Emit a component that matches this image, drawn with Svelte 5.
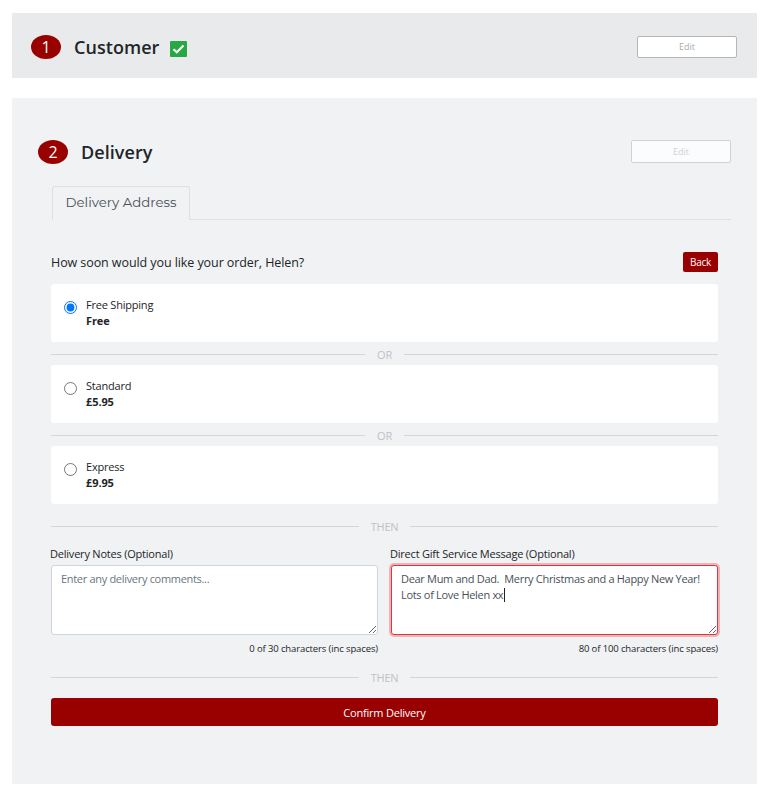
<script lang="ts">
  let selected = "free";
  let notes = "";
  let message =
    "Dear Mum and Dad.  Merry Christmas and a Happy New Year!\nLots of Love Helen xx";

  const options = [
    { id: "free", name: "Free Shipping", price: "Free" },
    { id: "standard", name: "Standard", price: "£5.95" },
    { id: "express", name: "Express", price: "£9.95" },
  ];
</script>

<main>
  <section class="step customer">
    <header>
      <span class="number">1</span>
      <h2>Customer</h2>
      <svg class="check" viewBox="0 0 17 16" width="17" height="16">
        <rect width="17" height="16" rx="1" fill="#28a745" />
        <path d="M3.5 8.2 6.8 11.3 13.5 4.6" fill="none" stroke="#fff" stroke-width="2.1" />
      </svg>
      <button class="edit">Edit</button>
    </header>
  </section>

  <section class="step delivery">
    <header>
      <span class="number">2</span>
      <h2>Delivery</h2>
      <button class="edit" disabled>Edit</button>
    </header>

    <nav>
      <span class="tab">Delivery Address</span>
    </nav>

    <div class="body">
      <div class="question">
        <span>How soon would you like your order, Helen?</span>
        <button class="back">Back</button>
      </div>

      {#each options as option, i}
        {#if i > 0}
          <div class="divider">OR</div>
        {/if}
        <label class="option">
          <input type="radio" name="shipping" value={option.id} bind:group={selected} />
          <span>
            <span class="name">{option.name}</span>
            <strong>{option.price}</strong>
          </span>
        </label>
      {/each}

      <div class="divider first">THEN</div>

      <div class="fields">
        <div class="field">
          <label for="notes">Delivery Notes (Optional)</label>
          <textarea id="notes" placeholder="Enter any delivery comments..." bind:value={notes}></textarea>
          <small>{notes.length} of 30 characters (inc spaces)</small>
        </div>
        <div class="field">
          <label for="message">Direct Gift Service Message (Optional)</label>
          <div class="active">
            <textarea id="message" bind:value={message}></textarea>
            <i class="caret"></i>
          </div>
          <small>80 of 100 characters (inc spaces)</small>
        </div>
      </div>

      <div class="divider second">THEN</div>

      <button class="confirm">Confirm Delivery</button>
    </div>
  </section>
</main>

<style>
  :global(body) {
    margin: 0;
    background: #fff;
  }

  main {
    box-sizing: border-box;
    width: 768px;
    height: 793px;
    padding: 13px 11px 0 12px;
    font-family: "Open Sans", "Noto Sans", sans-serif;
    font-size: 11px;
    letter-spacing: -0.21px;
    color: #212529;
    overflow: hidden;
  }

  button,
  textarea {
    font-family: inherit;
    letter-spacing: inherit;
    box-sizing: border-box;
  }

  .customer {
    box-sizing: border-box;
    height: 65px;
    padding: 21px 20px 0 19px;
    margin-bottom: 20px;
    background: #e9eaeb;
  }

  .delivery {
    box-sizing: border-box;
    height: 686px;
    padding: 41px 26px 0;
    background: #f1f2f4;
  }

  header {
    display: flex;
    align-items: center;
    height: 25px;
  }

  .number {
    width: 30px;
    height: 24px;
    border-radius: 50%;
    background: #990000;
    color: #fff;
    font-size: 16px;
    line-height: 25px;
    text-align: center;
  }

  h2 {
    margin: 0 0 0 13px;
    font-size: 18px;
    font-weight: 600;
    line-height: 24px;
    letter-spacing: 0.05px;
  }

  .check {
    margin: 5px 0 0 11px;
  }

  .edit {
    width: 100px;
    height: 22px;
    margin-left: auto;
    padding: 0;
    border: 1px solid #b4b6ba;
    border-radius: 2px;
    background: #fff;
    color: #a9abad;
    font-size: 9px;
    letter-spacing: 0;
  }

  .edit:disabled {
    height: 23px;
    border-color: #cfd1d6;
    background: #fbfcfd;
    color: #cfd1d5;
  }

  nav {
    display: flex;
    height: 33px;
    margin: 22px 0 0 14px;
    border-bottom: 1px solid #dddfe3;
  }

  .tab {
    box-sizing: border-box;
    width: 138px;
    height: 34px;
    border: 1px solid #dddfe3;
    border-bottom-color: #f1f2f4;
    border-radius: 3px 3px 0 0;
    color: #495057;
    font-family: Montserrat, Inter, sans-serif;
    font-size: 13.3px;
    line-height: 31px;
    letter-spacing: 0;
    text-align: center;
  }

  .body {
    padding: 32px 13px 0;
  }

  .question {
    display: flex;
    justify-content: space-between;
    align-items: center;
    height: 20px;
    margin-bottom: 12px;
    font-size: 12.5px;
    letter-spacing: -0.08px;
  }

  .back {
    width: 35px;
    height: 20px;
    padding: 0;
    border: 0;
    border-radius: 2px;
    background: #990000;
    color: #fff;
    font-size: 10px;
    letter-spacing: -0.3px;
  }

  .option {
    display: flex;
    box-sizing: border-box;
    height: 58px;
    padding: 13px;
    border-radius: 3px;
    background: #fff;
    line-height: 16px;
  }

  .option input {
    width: 13px;
    height: 13px;
    margin: 4px 9px 0 0;
  }

  .name,
  strong {
    display: block;
  }

  strong {
    font-weight: 700;
    letter-spacing: -0.1px;
  }

  .divider {
    display: flex;
    box-sizing: border-box;
    align-items: center;
    gap: 12px;
    height: 23px;
    padding-top: 2px;
    color: #bfc2c5;
    line-height: 21px;
  }

  .divider::before,
  .divider::after {
    content: "";
    flex: 1;
    height: 1px;
    background: #d3d5d9;
  }

  .first {
    margin-top: 10px;
    margin-bottom: 9px;
  }

  .second {
    margin-top: 9px;
    margin-bottom: 10px;
  }

  .fields {
    display: grid;
    grid-template-columns: 327px 327px;
    gap: 13px;
  }

  .field {
    display: flex;
    flex-direction: column;
  }

  .field label {
    height: 19px;
    margin-left: -1px;
    line-height: 15px;
  }

  textarea {
    display: block;
    width: 100%;
    height: 70px;
    margin: 0;
    padding: 5px 9px;
    border: 1px solid #ced4da;
    border-radius: 3px;
    background: #fff;
    color: #495057;
    font-size: 11px;
    line-height: 16px;
    letter-spacing: -0.31px;
    outline: none;
    overflow: hidden;
  }

  textarea::placeholder {
    color: #6c757d;
  }

  .active {
    position: relative;
  }

  .active textarea {
    border-color: #dc3545;
    box-shadow: 0 0 0 2px #f0b3b5;
  }

  .caret {
    position: absolute;
    left: 113px;
    top: 23px;
    width: 1px;
    height: 14px;
    background: #222;
  }

  small {
    height: 14px;
    margin-top: 7px;
    font-size: 9.5px;
    line-height: 14px;
    letter-spacing: -0.12px;
    text-align: right;
  }

  .confirm {
    display: block;
    width: 100%;
    height: 28px;
    padding: 0;
    border: 0;
    border-radius: 3px;
    background: #990000;
    color: #fff;
    font-size: 11px;
  }
</style>
